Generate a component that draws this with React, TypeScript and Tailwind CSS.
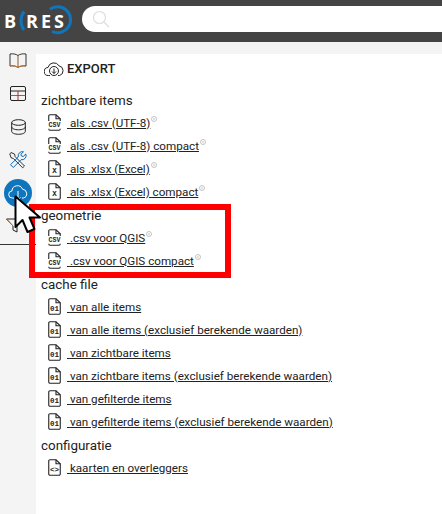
import React from "react";

const FileIcon = ({ label, small }: { label: string; small?: boolean }) => (
  <svg width="13" height="17" viewBox="0 0 13 17" fill="none" className="shrink-0 mr-[6px]">
    <path d={small ? "M.75 7V2A1.2 1.2 0 0 1 2 .75h6l4.25 4V7" : "M.75 15V2A1.2 1.2 0 0 1 2 .75h6l4.25 4V15A1.2 1.2 0 0 1 11 16.25H2A1.2 1.2 0 0 1 .75 15z"} stroke="#222" strokeWidth="1.1" />
    <path d="M8 .75v4h4.25" stroke="#222" strokeWidth="1.1" />
    {small && <path d="M.75 14.8c0 .9.5 1.45 1.25 1.45h9c.75 0 1.25-.55 1.25-1.45" stroke="#222" strokeWidth="1.1" />}
    <text x="6.5" y={small ? 12.8 : 12.6} textAnchor="middle" fontSize={small ? 6.6 : 7.5} fontWeight="700" fontFamily="'Liberation Mono', monospace" fill="#222" textLength={small ? 12 : undefined}>{label}</text>
  </svg>
);

const Row = ({ icon, text, info = false, small = false }: { icon: string; text: string; info?: boolean; small?: boolean }) => (
  <div className="h-[23px] pb-[2px] flex items-center pl-[7px]">
    <FileIcon label={icon} small={small} />
    <a className="text-[11.65px] text-[#222] underline leading-[14px]">&nbsp;{text}</a>
    {info && (
      <svg width="6" height="6" viewBox="0 0 6 6" className="ml-[1px] mb-[8px]">
        <circle cx="3" cy="3" r="2.5" fill="none" stroke="#aaa" strokeWidth="0.7" />
        <path d="M3 2v2.2" stroke="#aaa" strokeWidth="0.7" />
      </svg>
    )}
  </div>
);

const Heading = ({ children }: { children: string }) => (
  <div className="h-[23px] pt-[2px] flex items-center text-[13.4px] text-[#222]">{children}</div>
);

const Cell = ({ children }: { children: React.ReactNode }) => (
  <div className="h-[33px] flex items-center justify-center">{children}</div>
);

export default function App() {
  return (
    <div className="relative w-[442px] h-[514px] overflow-hidden bg-white" style={{ fontFamily: "Roboto, 'Noto Sans', sans-serif" }}>
      <header className="h-[42px] bg-[#444444] flex items-center">
        <div className="w-[82px] h-[42px] flex items-center relative shrink-0">
          <svg width="82" height="42" viewBox="0 0 82 42" className="absolute left-0 top-0">
            <path d="M24 11.5C20 17 20 25 24 30" fill="none" stroke="#0f75bc" strokeWidth="3" />
            <path d="M50 9.2A13 13 0 1 1 52 31.5" fill="none" stroke="#0f75bc" strokeWidth="3" />
          </svg>
          <span className="relative text-white font-bold text-[18px] leading-none pl-[4px] mr-[10px]" style={{ fontFamily: "'Open Sans', sans-serif" }}>B</span>
          <span className="relative text-white font-bold text-[18px] leading-none tracking-[3px]" style={{ fontFamily: "'Open Sans', sans-serif" }}>RES</span>
        </div>
        <div className="flex-1 h-[26px] bg-white rounded-l-[13px] flex items-center pl-[10px] mt-[-4px]">
          <svg width="18" height="18" viewBox="0 0 18 18" fill="none">
            <circle cx="7.5" cy="7.5" r="6" stroke="#ddd" strokeWidth="1.2" />
            <path d="M12 12L17 17" stroke="#ddd" strokeWidth="1.2" />
          </svg>
        </div>
      </header>
      <div className="flex h-[472px] bg-[#f4f4f4]">
        <aside className="w-[36px] shrink-0 h-full pt-[2px]">
          <div className="h-[201px] border-b border-[#333] w-[36px]">
            <Cell>
              <svg width="18" height="15" viewBox="0 0 18 15" fill="none">
                <path d="M9 2.5C7 1 4 .5 1 1v12c3-.5 6 0 8 1.5 2-1.5 5-2 8-1.5V1C14 .5 11 1 9 2.5z" stroke="#333" strokeWidth="1" />
                <path d="M9 2.5v12" stroke="#8a5a2a" strokeWidth="1" />
                <path d="M1 13c3-.5 6 0 8 1.5 2-1.5 5-2 8-1.5" stroke="#c8782a" strokeWidth="1" />
              </svg>
            </Cell>
            <Cell>
              <svg width="16" height="15" viewBox="0 0 16 15" fill="none">
                <rect x="0.5" y="0.5" width="15" height="14" rx="1.5" stroke="#222" />
                <path d="M.5 5h15" stroke="#222" />
                <path d="M.5 9.5h15" stroke="#b5552a" />
                <path d="M8 5v9.5" stroke="#a33" />
              </svg>
            </Cell>
            <Cell>
              <svg width="15" height="16" viewBox="0 0 15 16" fill="none">
                <ellipse cx="7.5" cy="3.5" rx="6.8" ry="2.8" stroke="#222" />
                <path d="M.7 3.5v9c0 1.5 3 2.8 6.8 2.8s6.8-1.3 6.8-2.8v-9" stroke="#222" />
                <path d="M.7 8c0 1.5 3 2.8 6.8 2.8s6.8-1.3 6.8-2.8" stroke="#222" />
              </svg>
            </Cell>
            <Cell>
              <svg width="18" height="18" viewBox="0 0 18 18" fill="none">
                <path d="M2 1.5L5.5 3l.7 2.7 9.3 9.3-1.8 1.8-9.3-9.3L2 6.7.8 3z" stroke="#333" />
                <path d="M16.8 3l-2.6 2.5-1.8-.5-.5-1.8L14.5.8A4.2 4.2 0 0 0 9.3 6L1.5 13.7l2.8 2.8L12 8.7A4.2 4.2 0 0 0 16.8 3z" stroke="#0f6ab0" />
              </svg>
            </Cell>
            <Cell>
              <div className="w-[28px] h-[28px] rounded-full bg-[#0f75bc] flex items-center justify-center">
                <svg width="20" height="18" viewBox="0 0 20 18" fill="none">
                  <path d="M6 14H4.5a3.5 3.5 0 0 1-.6-7A5.5 5.5 0 0 1 14.5 5.2 4.5 4.5 0 0 1 15.5 14H14" stroke="#fff" />
                  <path d="M10 7v9M7.5 13.5l2.5 2.5 2.5-2.5" stroke="#fff" />
                </svg>
              </div>
            </Cell>
            <Cell>
              <svg width="20" height="17" viewBox="0 0 20 17" fill="none" className="mr-[6px]">
                <path d="M1.5 2l17 0-6.5 7v6l-4-2V9z" stroke="#222" />
                <path d="M1.5 2L8 9" stroke="#c8782a" />
              </svg>
            </Cell>
          </div>
        </aside>
        <main className="flex-1 pl-[5px] pt-[3px] mt-[12px] bg-white">
          <div className="flex items-center h-[24px] mb-[8px] pl-[3px]">
            <svg width="20" height="17" viewBox="0 0 20 17" fill="none" className="mr-[3px]">
              <path d="M6 14.5H4.5a4 4 0 0 1-.5-8A6 6 0 0 1 15 4.8a5 5 0 0 1 .5 9.7H14" stroke="#222" />
              <circle cx="10" cy="10" r="4.5" fill="#fff" stroke="#222" />
              <path d="M10 7.5v5M8 10.5l2 2 2-2" stroke="#222" />
            </svg>
            <span className="text-[13px] font-medium text-[#222]">EXPORT</span>
          </div>
          <Heading>zichtbare items</Heading>
          <Row icon="CSV" small text="als .csv (UTF-8)" info />
          <Row icon="CSV" small text="als .csv (UTF-8) compact" info />
          <Row icon="X" text="als .xlsx (Excel)" info />
          <Row icon="X" text="als .xlsx (Excel) compact" info />
          <Heading>geometrie</Heading>
          <Row icon="CSV" small text=".csv voor QGIS" info />
          <Row icon="CSV" small text=".csv voor QGIS compact" info />
          <Heading>cache file</Heading>
          <Row icon="01" text="van alle items" />
          <Row icon="01" text="van alle items (exclusief berekende waarden)" />
          <Row icon="01" text="van zichtbare items" />
          <Row icon="01" text="van zichtbare items (exclusief berekende waarden)" />
          <Row icon="01" text="van gefilterde items" />
          <Row icon="01" text="van gefilterde items (exclusief berekende waarden)" />
          <Heading>configuratie</Heading>
          <Row icon="<>" text="kaarten en overleggers" />
        </main>
      </div>
      <div className="absolute left-[29px] top-[204px] w-[202px] h-[74px] border-[6px] border-[#fe0000]" />
      <svg width="30" height="42" viewBox="0 0 30 42" className="absolute left-[13px] top-[195px]">
        <path d="M2.5 1.5V32l7-7 5 12 7-3-5-11.5H27z" fill="#fff" stroke="#000" strokeWidth="2" strokeLinejoin="round" />
      </svg>
    </div>
  );
}
